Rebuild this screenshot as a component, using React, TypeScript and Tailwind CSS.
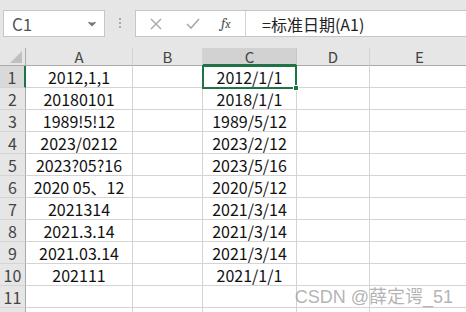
import { ChevronDown } from "lucide-react";

const colA = ["2012,1,1", "20180101", "1989!5!12", "2023/0212", "2023?05?16", "2020 05、12", "2021314", "2021.3.14", "2021.03.14", "202111", "", ""];
const colC = ["2012/1/1", "2018/1/1", "1989/5/12", "2023/2/12", "2023/5/16", "2020/5/12", "2021/3/14", "2021/3/14", "2021/3/14", "2021/1/1", "", ""];
const font = { fontFamily: '"Noto Sans CJK SC", "Noto Sans", sans-serif' };

function Toolbar() {
  return (
    <div className="flex h-[48px] items-start bg-[#e6e6e6] pt-[10px]">
      <div className="ml-[3px] flex h-[27px] w-[102px] items-center justify-between border border-[#c6c6c6] bg-white pl-[8px] pr-[6px]">
        <span className="text-[17px] leading-none text-[#555]">C1</span>
        <ChevronDown className="h-3 w-3 fill-[#777] text-[#777]" strokeWidth={3} />
      </div>
      <div className="flex w-[30px] flex-col items-center gap-[2px] pt-[8px]">
        <span className="h-[2px] w-[2px] bg-[#aaa]" />
        <span className="h-[2px] w-[2px] bg-[#aaa]" />
        <span className="h-[2px] w-[2px] bg-[#aaa]" />
      </div>
      <div className="flex h-[27px] flex-1 border border-r-0 border-[#c6c6c6] bg-white">
        <div className="flex w-[110px] items-center border-r border-[#d4d4d4] pl-[12px]">
          <svg width="14" height="14" viewBox="0 0 14 14" className="ml-[1px]">
            <path d="M2 2 L12 12 M12 2 L2 12" stroke="#a8a8a8" strokeWidth="1.4" />
          </svg>
          <svg width="16" height="14" viewBox="0 0 16 14" className="ml-[22px]">
            <path d="M2 7 L6 11 L14 2" stroke="#a8a8a8" strokeWidth="1.6" fill="none" />
          </svg>
          <span className="ml-[20px] font-serif text-[15px] leading-none italic text-[#555]">
            f<span className="text-[12px]">x</span>
          </span>
        </div>
        <div className="flex items-center pl-[16px] text-[16px] leading-none text-[#222]">=标准日期(A1)</div>
      </div>
    </div>
  );
}

function Grid() {
  const cols = ["A", "B", "C", "D", "E"];
  return (
    <div className="grid grid-cols-[26px_107px_70px_94px_73px_100px] grid-rows-[18px_repeat(12,22px)]">
      <div className="relative border-r border-b border-[#ababab] bg-[#e6e6e6]">
        <svg width="12" height="12" viewBox="0 0 12 12" className="absolute right-[3px] bottom-[2px]">
          <path d="M12 0 L12 12 L0 12 Z" fill="#c0c0c0" />
        </svg>
      </div>
      {cols.map((c) => (
        <div
          key={c}
          className={
            c === "C"
              ? "flex items-center justify-center border-r border-b-2 border-r-[#c6c6c6] border-b-[#217346] bg-[#d2d2d2] text-[15px] leading-none text-[#444]"
              : "flex items-center justify-center border-r border-b border-r-[#d4d4d4] border-b-[#ababab] bg-[#e6e6e6] text-[15px] leading-none text-[#444]"
          }
        >
          {c}
        </div>
      ))}
      {Array.from({ length: 12 }).map((_, i) => (
        <Row key={i} i={i} />
      ))}
    </div>
  );
}

function Row({ i }: { i: number }) {
  const cell = "flex items-center justify-center border-r border-b border-[#d4d4d4] bg-white text-[16px] leading-none text-[#111]";
  return (
    <>
      <div
        className={
          i === 0
            ? "flex items-center justify-center border-r-2 border-b border-r-[#217346] border-b-[#d4d4d4] bg-[#d9d9d9] text-[16px] leading-none text-[#444]"
            : "flex items-center justify-center border-r border-b border-r-[#ababab] border-b-[#d4d4d4] bg-[#e6e6e6] text-[16px] leading-none text-[#444]"
        }
      >
        {i < 11 ? i + 1 : ""}
      </div>
      <div className={cell}>{colA[i]}</div>
      <div className={cell} />
      <div className={i === 0 ? cell + " relative" : cell}>
        {colC[i]}
        {i === 0 && (
          <div className="absolute -top-[1px] -left-[1px] h-[24px] w-[95px] border-2 border-[#217346]">
            <span className="absolute -right-[4px] -bottom-[4px] h-[6px] w-[6px] border border-white bg-[#217346]" />
          </div>
        )}
      </div>
      <div className={cell} />
      <div className={cell} />
    </>
  );
}

export default function App() {
  return (
    <div className="relative h-[312px] w-[466px] overflow-hidden bg-white" style={font}>
      <Toolbar />
      <Grid />
      <div
        className="absolute right-[13px] bottom-[6px] text-[18px] leading-none text-[#a0a0a0]/80"
        style={{ fontFamily: '"Liberation Sans", "Noto Sans CJK SC", sans-serif' }}
      >
        CSDN @薛定谔_51
      </div>
    </div>
  );
}
